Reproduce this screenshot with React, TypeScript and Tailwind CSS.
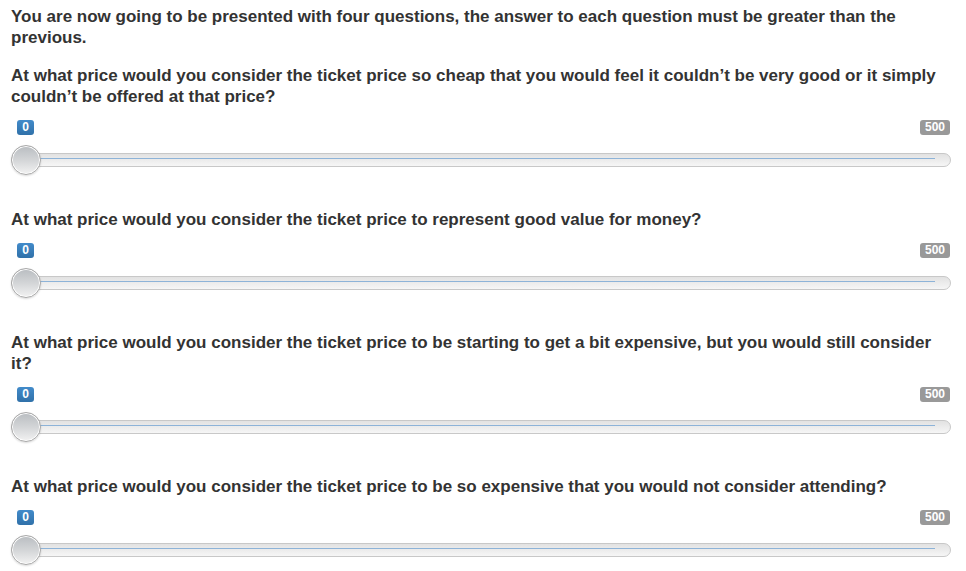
import React from "react";

const questions = [
  "At what price would you consider the ticket price so cheap that you would feel it couldn\u2019t be very good or it simply couldn\u2019t be offered at that price?",
  "At what price would you consider the ticket price to represent good value for money?",
  "At what price would you consider the ticket price to be starting to get a bit expensive, but you would still consider it?",
  "At what price would you consider the ticket price to be so expensive that you would not consider attending?",
];

function Slider() {
  return (
    <div>
      <div className="flex justify-between h-[15px] pl-[6px] pr-[1px]">
        <span className="h-[15px] w-[17px] rounded-[3px] bg-gradient-to-b from-[#428bca] to-[#3071a9] text-white text-[12px] font-bold leading-[15px] text-center">
          0
        </span>
        <span className="h-[15px] w-[30px] rounded-[3px] bg-[#999999] text-white text-[12px] font-bold leading-[15px] text-center">
          500
        </span>
      </div>
      <div className="relative mt-[18px] h-[14px]">
        <div className="absolute inset-0 rounded-full border border-[#c8c8c8] bg-gradient-to-b from-[#e2e2e2] to-[#f6f6f6]" />
        <div className="absolute left-[28px] right-[16px] top-[5px] h-[1px] bg-[#8db3d8]" />
        <div className="absolute left-0 top-[-8px] w-[30px] h-[30px] rounded-full border border-[#a9a9a9] bg-gradient-to-b from-[#b9bdc1] via-[#d3d5d7] to-[#f2f2f2] shadow-[inset_0_0_0_1px_#ffffff,0_1px_2px_rgba(0,0,0,0.15)]" />
      </div>
    </div>
  );
}

export default function App() {
  return (
    <div
      className="bg-white text-[#333333] px-[11px] pt-[6px] w-[966px] min-h-[571px]"
      style={{ fontFamily: '"Liberation Sans", Arial, sans-serif' }}
    >
      <div className="w-[940px]">
        <p className="text-[17px] font-bold leading-[21px]">
          You are now going to be presented with four questions, the answer to each question must be greater than the previous.
        </p>
        <div className="mt-[17px] flex flex-col gap-[42px]">
          {questions.map((q, i) => (
            <div key={i}>
              <p className="text-[17px] font-bold leading-[21px] mb-[13px]">{q}</p>
              <Slider />
            </div>
          ))}
        </div>
      </div>
    </div>
  );
}
